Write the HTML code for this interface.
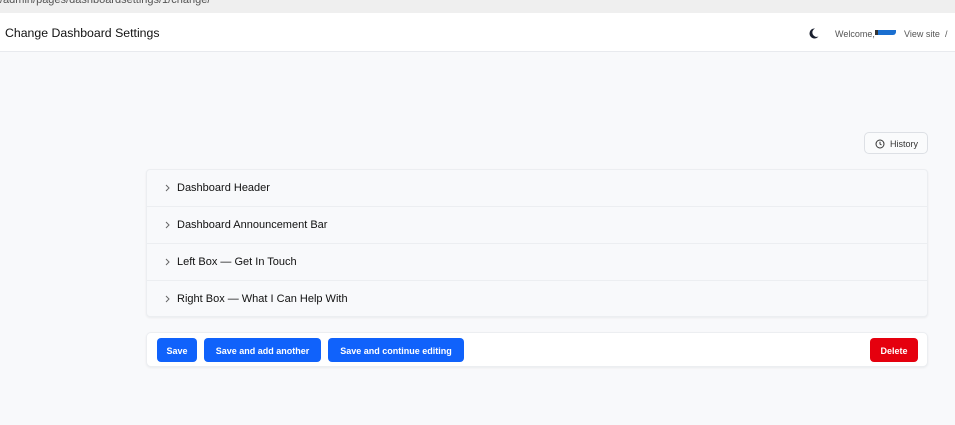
<!DOCTYPE html>
<html><head><meta charset="utf-8"><style>
*{box-sizing:border-box;margin:0;padding:0}
body{width:955px;height:425px;overflow:hidden;background:#f8f9fb;font-family:"Liberation Sans",sans-serif;position:relative;color:#111827}
.top{position:absolute;left:0;top:0;width:955px;height:13px;background:#efefef;overflow:hidden}
.top span{position:absolute;left:0;top:-6px;font-size:11px;color:#555}
.hdr{position:absolute;left:0;top:13px;width:955px;height:39px;background:#fff;border-bottom:1px solid #e8eaee}
.hdr h1{position:absolute;left:5px;top:13px;font-size:12.3px;font-weight:normal;color:#111}
.hdr .r{position:absolute;top:15.5px;font-size:9px;color:#555}
.hist{position:absolute;left:864px;top:132px;width:64px;height:22px;border:1px solid #dde0e5;border-radius:5px;background:#fafbfc;font-size:9px;color:#333;padding:5.5px 0 0 25px}
.hist svg{position:absolute;left:10px;top:5.5px}
.card{position:absolute;left:146px;top:169px;width:782px;height:148px;background:#f8f9fb;border:1px solid #eceef1;border-radius:4px;box-shadow:0 1px 2px rgba(0,0,0,.06)}
.row{height:37px;border-bottom:1px solid #eceef1;position:relative;font-size:11px;color:#111}
.row:last-child{border-bottom:none}
.row span{position:absolute;left:30px;top:12px}
.row svg{position:absolute;left:18px;top:14px}
.bar{position:absolute;left:146px;top:332px;width:782px;height:35px;background:#fff;border:1px solid #eceef1;border-radius:5px;box-shadow:0 1px 2px rgba(0,0,0,.06)}
.b{position:absolute;top:5px;height:24px;border-radius:4px;background:#1062fb;color:#fff;font-size:9px;font-weight:bold;text-align:center;line-height:26px}
</style></head><body>
<div class="top"><span>/admin/pages/dashboardsettings/1/change/</span></div>
<div class="hdr"><h1>Change Dashboard Settings</h1>
<svg style="position:absolute;left:809px;top:15px" width="10" height="11" viewBox="0 0 10 11"><path d="M6 0.5A5 5 0 1 0 9.5 8.5A4 4 0 0 1 6 0.5Z" fill="#1a1f2e"/></svg>
<span class="r" style="left:835px">Welcome,</span>
<div style="position:absolute;left:876px;top:17px;width:20px;height:5px;background:#1a6fd0;border-radius:0 0 3px 1px"></div>
<div style="position:absolute;left:875px;top:17px;width:3px;height:5px;background:#333"></div>
<span class="r" style="left:904px">View site</span><span class="r" style="left:945px">/</span>
</div>
<div class="hist"><svg width="10" height="10" viewBox="0 0 10 10"><circle cx="5" cy="5" r="4" fill="none" stroke="#333" stroke-width="1"/><path d="M5 2.8V5L6.5 6" fill="none" stroke="#333" stroke-width="1"/></svg>History</div>
<div class="card">
<div class="row"><svg width="5" height="8" viewBox="0 0 5 8"><path d="M1 1L4 4L1 7" fill="none" stroke="#666" stroke-width="1"/></svg><span>Dashboard Header</span></div>
<div class="row"><svg width="5" height="8" viewBox="0 0 5 8"><path d="M1 1L4 4L1 7" fill="none" stroke="#666" stroke-width="1"/></svg><span>Dashboard Announcement Bar</span></div>
<div class="row"><svg width="5" height="8" viewBox="0 0 5 8"><path d="M1 1L4 4L1 7" fill="none" stroke="#666" stroke-width="1"/></svg><span>Left Box — Get In Touch</span></div>
<div class="row"><svg width="5" height="8" viewBox="0 0 5 8"><path d="M1 1L4 4L1 7" fill="none" stroke="#666" stroke-width="1"/></svg><span>Right Box — What I Can Help With</span></div>
</div>
<div class="bar">
<div class="b" style="left:10px;width:40px">Save</div>
<div class="b" style="left:57px;width:117px">Save and add another</div>
<div class="b" style="left:181px;width:136px">Save and continue editing</div>
<div class="b" style="left:723px;width:48px;background:#e5000e">Delete</div>
</div>
</body></html>
